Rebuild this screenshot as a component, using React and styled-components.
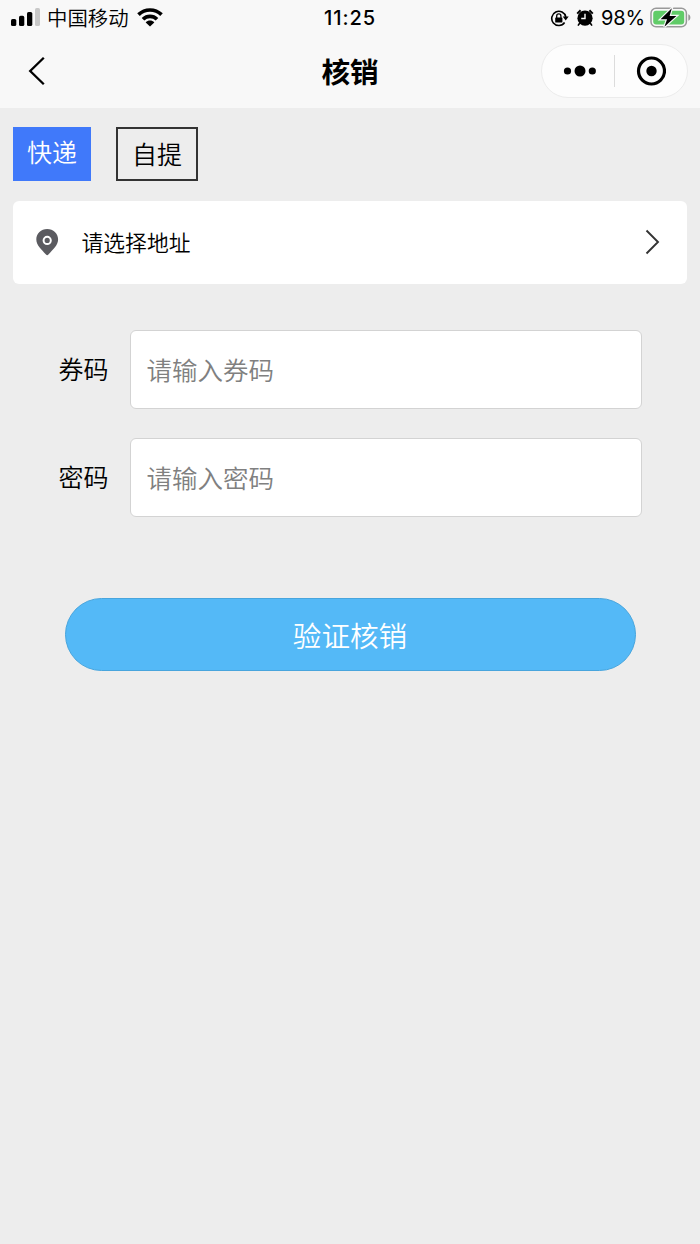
import React from 'react';
import styled, { createGlobalStyle } from 'styled-components';

const GlobalStyle = createGlobalStyle`
  * { box-sizing: border-box; }
  body {
    margin: 0;
    background: #ededed;
    color: #000;
    font-family: "Noto Sans CJK SC", sans-serif;
  }
  button, input { font-family: inherit; }
  svg { display: block; flex: none; }
`;

const Page = styled.div`
  width: 700px;
  min-height: 1244px;
  background: #ededed;
`;

const Header = styled.header`
  height: 108px;
  background: #f8f8f8;
`;

const StatusBar = styled.div`
  display: grid;
  grid-template-columns: 1fr auto 1fr;
  height: 35px;
  padding: 0 8px 0 11px;
`;

const StatusGroup = styled.div`
  display: flex;
  align-items: center;
  justify-content: ${(p) => (p.$end ? 'flex-end' : 'flex-start')};
`;

const Carrier = styled.span`
  margin: 0 8px 0 7px;
  padding-bottom: 2px;
  font-size: 20.4px;
  font-weight: 350;
  line-height: 34px;
`;

const Clock = styled.span`
  margin-right: 3px;
  font: 500 20px/36px Inter, sans-serif;
  letter-spacing: 0.9px;
`;

const Battery = styled.span`
  margin: 0 5px 0 7px;
  font: 400 20px/36px Inter, sans-serif;
  letter-spacing: -0.15px;
`;

const NavBar = styled.div`
  display: grid;
  grid-template-columns: 1fr auto 1fr;
  align-items: center;
  height: 72px;
  padding: 0 12px;
`;

const BackButton = styled.button`
  justify-self: start;
  padding: 0 0 0 16px;
  border: 0;
  background: none;
`;

const Title = styled.h1`
  margin: 0;
  font-size: 28.6px;
  font-weight: 700;
  line-height: 40px;
`;

const Capsule = styled.div`
  justify-self: end;
  display: flex;
  align-items: center;
  width: 147px;
  height: 54px;
  padding: 0 21px;
  border: 1px solid #ececec;
  border-radius: 27px;
  background: #fdfdfd;
`;

const Divider = styled.span`
  width: 1px;
  height: 32px;
  margin: 0 21px 0 18px;
  background: #dcdcdc;
`;

const Tabs = styled.div`
  display: flex;
  gap: 25px;
  padding: 19px 13px 0;
`;

const Tab = styled.button`
  width: ${(p) => (p.$active ? 78 : 82)}px;
  height: 54px;
  padding: ${(p) => (p.$active ? '0 0 6px' : '0 0 2px')};
  border: ${(p) => (p.$active ? '0' : '2px solid #333')};
  background: ${(p) => (p.$active ? '#4079fa' : 'transparent')};
  color: ${(p) => (p.$active ? '#fff' : '#000')};
  font-size: 25px;
  font-weight: 350;
  line-height: 36px;
`;

const AddressCard = styled.div`
  display: flex;
  align-items: center;
  height: 83px;
  margin: 20px 13px 0;
  padding: 0 27px 2px 23px;
  border-radius: 6px;
  background: #fff;
`;

const AddressText = styled.span`
  flex: 1;
  margin-left: 22.5px;
  padding-top: 1px;
  font-size: 21.8px;
  font-weight: 350;
  line-height: 32px;
`;

const Form = styled.form`
  display: flex;
  flex-direction: column;
  gap: 29px;
  padding: 46px 58px 0;
`;

const Field = styled.label`
  display: flex;
  align-items: center;
  height: 79px;
`;

const FieldLabel = styled.span`
  width: 71.5px;
  padding: 0 0 4px 0.5px;
  font-size: 25px;
  font-weight: 350;
  line-height: 36px;
`;

const Input = styled.input`
  width: 512px;
  height: 79px;
  padding: 0 16px 2px;
  border: 1px solid #d3d3d3;
  border-radius: 6px;
  outline: none;
  background: #fff;
  font-size: 25.5px;
  font-weight: 350;
  &::placeholder { color: #808080; opacity: 1; }
`;

const Submit = styled.button`
  width: 571px;
  height: 73px;
  margin: 52px 0 0 7px;
  padding: 1px 1px 0 0;
  border: 1px solid #48a5dd;
  border-radius: 37px;
  background: #54b9f7;
  color: #fff;
  font-size: 28.6px;
  font-weight: 350;
  line-height: 40px;
`;

const SignalIcon = () => (
  <svg width="29" height="20" viewBox="0 0 29 20">
    <rect x="0" y="11" width="5.3" height="7" rx="1.6" />
    <rect x="8" y="7.8" width="5.3" height="10.2" rx="1.6" />
    <rect x="16" y="4" width="5.3" height="14" rx="1.6" />
    <rect x="24" y="0" width="5" height="18" rx="1.6" fill="#c8c8c8" />
  </svg>
);

const WifiIcon = () => (
  <svg width="26" height="21" viewBox="0 0 26 21">
    <g fill="none" stroke="#000" strokeWidth="3.7">
      <path d="M1.5 6.7C8 .4 18 .4 24.5 6.7" />
      <path d="M6 11.3C10 7.4 16 7.4 20 11.3" />
    </g>
    <path d="M8.7 14.4C11 12 15 12 17.3 14.4L13 18.6Z" />
  </svg>
);

const RotationLockIcon = () => (
  <svg width="19" height="17" viewBox="0 0 19 17">
    <path d="M15.8 7A7.1 7.1 0 1 0 14.6 12.5" fill="none" stroke="#000" strokeWidth="1.6" />
    <path d="M12.7 6.5h6l-3 4z" />
    <rect x="5.2" y="7.4" width="7.2" height="5.2" rx=".7" />
    <path d="M6.7 8V6a2.1 2.1 0 0 1 4.2 0v2" fill="none" stroke="#000" strokeWidth="1.3" />
  </svg>
);

const AlarmGlyph = styled.svg`
  margin-left: 7px;
`;

const AlarmIcon = () => (
  <AlarmGlyph width="18" height="18" viewBox="0 0 18 18">
    <circle cx="9" cy="9.2" r="7.6" />
    <path d="M1.2 4.6L4.6 1.2M13.4 1.2L16.8 4.6" stroke="#000" strokeWidth="2" />
    <path d="M3.8 14L2 16.6M14.2 14L16 16.6" stroke="#000" strokeWidth="1.6" />
    <path d="M9 4.8V9.5H5.2" fill="none" stroke="#fff" strokeWidth="1.4" />
  </AlarmGlyph>
);

const BatteryIcon = () => (
  <svg width="42" height="22" viewBox="0 0 42 22">
    <rect x="1" y="1.3" width="35.4" height="18.4" rx="5" fill="none" stroke="#999" strokeWidth="1.5" />
    <rect x="3.2" y="3.7" width="31" height="13.8" rx="3" fill="#61cc68" />
    <path d="M38.3 7.2c2.8 1 2.8 5.6 0 6.6z" fill="#999" />
    <path d="M21.8 1.3L10.6 12.2h6.5L14.4 19.8 26.4 8.9h-6.8z" stroke="#f8f8f8" strokeWidth="2.4" paintOrder="stroke" />
  </svg>
);

const BackIcon = () => (
  <svg width="18" height="30" viewBox="0 0 18 30">
    <path d="M15.8 1.7L2.2 15L15.8 28.3" fill="none" stroke="#000" strokeWidth="2.3" />
  </svg>
);

const MoreIcon = () => (
  <svg width="33" height="12" viewBox="0 0 33 12">
    <circle cx="4.5" cy="6" r="3.6" />
    <circle cx="17" cy="6" r="5.5" />
    <circle cx="29.3" cy="6" r="3.6" />
  </svg>
);

const CloseIcon = () => (
  <svg width="30" height="30" viewBox="0 0 30 30">
    <circle cx="15.5" cy="15" r="13" fill="none" stroke="#000" strokeWidth="3.2" />
    <circle cx="15.5" cy="15" r="5.2" />
  </svg>
);

const PinIcon = () => (
  <svg width="23" height="28" viewBox="0 0 23 28">
    <path d="M11.2 .9C5.1 .9 .3 5.2 .3 11.2c0 6.4 5.2 10 9.7 15.3q1.2 1.3 2.4 0c4.5-5.3 9.7-8.9 9.7-15.3C22.1 5.2 17.3 .9 11.2 .9z" fill="#5b5b60" />
    <circle cx="11.2" cy="12.4" r="3.6" fill="none" stroke="#fff" strokeWidth="2" />
  </svg>
);

const ArrowIcon = () => (
  <svg width="15" height="26" viewBox="0 0 15 26">
    <path d="M1.5 1.5L13 13L1.5 24.5" fill="none" stroke="#333" strokeWidth="1.9" />
  </svg>
);

const fields = [
  { label: '券码', placeholder: '请输入券码' },
  { label: '密码', placeholder: '请输入密码' },
];

export default function App() {
  return (
    <Page>
      <GlobalStyle />
      <Header>
        <StatusBar>
          <StatusGroup>
            <SignalIcon />
            <Carrier>中国移动</Carrier>
            <WifiIcon />
          </StatusGroup>
          <Clock>11:25</Clock>
          <StatusGroup $end>
            <RotationLockIcon />
            <AlarmIcon />
            <Battery>98%</Battery>
            <BatteryIcon />
          </StatusGroup>
        </StatusBar>
        <NavBar>
          <BackButton type="button" aria-label="返回"><BackIcon /></BackButton>
          <Title>核销</Title>
          <Capsule>
            <MoreIcon />
            <Divider />
            <CloseIcon />
          </Capsule>
        </NavBar>
      </Header>
      <Tabs>
        <Tab type="button" $active>快递</Tab>
        <Tab type="button">自提</Tab>
      </Tabs>
      <AddressCard>
        <PinIcon />
        <AddressText>请选择地址</AddressText>
        <ArrowIcon />
      </AddressCard>
      <Form>
        {fields.map((f) => (
          <Field key={f.label}>
            <FieldLabel>{f.label}</FieldLabel>
            <Input placeholder={f.placeholder} />
          </Field>
        ))}
        <Submit type="button">验证核销</Submit>
      </Form>
    </Page>
  );
}
